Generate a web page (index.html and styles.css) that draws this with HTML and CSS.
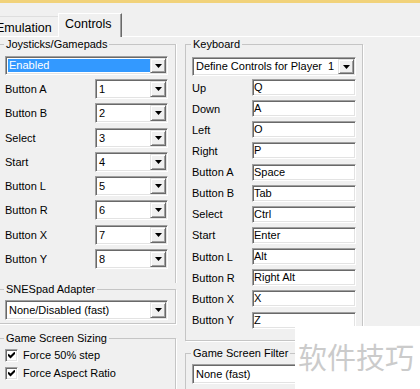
FILE: index.html
```html
<!DOCTYPE html>
<html lang="en">
<head>
    <meta charset="UTF-8">
    <meta name="viewport" content="width=device-width, initial-scale=1.0">
    <title>Controls</title>
    <link rel="stylesheet" href="styles.css">
</head>
<body>
    <div class="topbar"></div>
    <div class="tabs">
        <div class="tab">Emulation</div>
        <div class="tab active">Controls</div>
    </div>

    <div class="panel">
        <div class="col col-left">
            <fieldset class="group joy">
                <legend>Joysticks/Gamepads</legend>
                <div class="combo top-combo">
                    <span class="val selected">Enabled</span>
                    <span class="drop"><svg width="7" height="4" viewBox="0 0 7 4"><path d="M0 0h7L3.5 4z"/></svg></span>
                </div>
                <div class="rows joy-rows">
                    <div class="row"><span class="lbl">Button A</span><div class="combo"><span class="val">1</span><span class="drop"><svg width="7" height="4" viewBox="0 0 7 4"><path d="M0 0h7L3.5 4z"/></svg></span></div></div>
                    <div class="row"><span class="lbl">Button B</span><div class="combo"><span class="val">2</span><span class="drop"><svg width="7" height="4" viewBox="0 0 7 4"><path d="M0 0h7L3.5 4z"/></svg></span></div></div>
                    <div class="row"><span class="lbl">Select</span><div class="combo"><span class="val">3</span><span class="drop"><svg width="7" height="4" viewBox="0 0 7 4"><path d="M0 0h7L3.5 4z"/></svg></span></div></div>
                    <div class="row"><span class="lbl">Start</span><div class="combo"><span class="val">4</span><span class="drop"><svg width="7" height="4" viewBox="0 0 7 4"><path d="M0 0h7L3.5 4z"/></svg></span></div></div>
                    <div class="row"><span class="lbl">Button L</span><div class="combo"><span class="val">5</span><span class="drop"><svg width="7" height="4" viewBox="0 0 7 4"><path d="M0 0h7L3.5 4z"/></svg></span></div></div>
                    <div class="row"><span class="lbl">Button R</span><div class="combo"><span class="val">6</span><span class="drop"><svg width="7" height="4" viewBox="0 0 7 4"><path d="M0 0h7L3.5 4z"/></svg></span></div></div>
                    <div class="row"><span class="lbl">Button X</span><div class="combo"><span class="val">7</span><span class="drop"><svg width="7" height="4" viewBox="0 0 7 4"><path d="M0 0h7L3.5 4z"/></svg></span></div></div>
                    <div class="row"><span class="lbl">Button Y</span><div class="combo"><span class="val">8</span><span class="drop"><svg width="7" height="4" viewBox="0 0 7 4"><path d="M0 0h7L3.5 4z"/></svg></span></div></div>
                </div>
            </fieldset>

            <fieldset class="group snes">
                <legend>SNESpad Adapter</legend>
                <div class="combo">
                    <span class="val">None/Disabled (fast)</span>
                    <span class="drop"><svg width="7" height="4" viewBox="0 0 7 4"><path d="M0 0h7L3.5 4z"/></svg></span>
                </div>
            </fieldset>

            <fieldset class="group sizing">
                <legend>Game Screen Sizing</legend>
                <label class="check-row"><span class="check"><svg width="7" height="7" viewBox="0 0 7 7"><path d="M0 2.5l2.5 2.5L7 0.5" fill="none" stroke="#000" stroke-width="2"/></svg></span>Force 50% step</label>
                <label class="check-row"><span class="check"><svg width="7" height="7" viewBox="0 0 7 7"><path d="M0 2.5l2.5 2.5L7 0.5" fill="none" stroke="#000" stroke-width="2"/></svg></span>Force Aspect Ratio</label>
            </fieldset>
        </div>

        <div class="col col-right">
            <fieldset class="group keys">
                <legend>Keyboard</legend>
                <div class="combo top-combo">
                    <span class="val">Define Controls for Player&nbsp; 1</span>
                    <span class="drop"><svg width="7" height="4" viewBox="0 0 7 4"><path d="M0 0h7L3.5 4z"/></svg></span>
                </div>
                <div class="rows key-rows">
                    <div class="row"><span class="lbl">Up</span><span class="field">Q</span></div>
                    <div class="row"><span class="lbl">Down</span><span class="field">A</span></div>
                    <div class="row"><span class="lbl">Left</span><span class="field">O</span></div>
                    <div class="row"><span class="lbl">Right</span><span class="field">P</span></div>
                    <div class="row"><span class="lbl">Button A</span><span class="field">Space</span></div>
                    <div class="row"><span class="lbl">Button B</span><span class="field">Tab</span></div>
                    <div class="row"><span class="lbl">Select</span><span class="field">Ctrl</span></div>
                    <div class="row"><span class="lbl">Start</span><span class="field">Enter</span></div>
                    <div class="row"><span class="lbl">Button L</span><span class="field">Alt</span></div>
                    <div class="row"><span class="lbl">Button R</span><span class="field">Right Alt</span></div>
                    <div class="row"><span class="lbl">Button X</span><span class="field">X</span></div>
                    <div class="row"><span class="lbl">Button Y</span><span class="field">Z</span></div>
                </div>
            </fieldset>

            <fieldset class="group filter">
                <legend>Game Screen Filter</legend>
                <div class="combo">
                    <span class="val">None (fast)</span>
                    <span class="drop"><svg width="7" height="4" viewBox="0 0 7 4"><path d="M0 0h7L3.5 4z"/></svg></span>
                </div>
            </fieldset>
        </div>
    </div>

    <div class="watermark">软件技巧</div>
</body>
</html>
```

FILE: styles.css
```css
body {
    margin: 0;
    width: 420px;
    height: 389px;
    overflow: hidden;
    position: relative;
    background-color: #f0f0f0;
    font-family: "Liberation Sans", Arial, sans-serif;
    font-size: 11px;
    color: #000;
}

.topbar {
    height: 3px;
    background-color: #f1d27a;
}

/* tab strip */
.tabs {
    display: flex;
    align-items: flex-end;
    height: 33px;
    margin-left: -8px;
}

.tab {
    box-sizing: border-box;
    font-size: 12.5px;
    width: 66px;
    height: 20px;
    padding: 4px 0 0 4px;
    border-top: 1px solid #dedede;
}

.tab.active {
    position: relative;
    z-index: 1;
    width: 64px;
    height: 24px;
    margin-bottom: -1px;
    padding: 3px 0 0 6px;
    background-color: #f0f0f0;
    border: 1px solid;
    border-color: #fff #696969 transparent #fff;
    border-bottom: none;
    box-shadow: inset -1px 0 #a0a0a0;
}

.panel {
    display: flex;
    gap: 9px;
    margin-left: -3px;
    border-top: 1px solid #fff;
}

.col {
    display: flex;
    flex-direction: column;
    padding-top: 1px;
}

.col-left {
    width: 179px;
}

.col-right {
    width: 178px;
}

/* group boxes */
.group {
    margin: 0;
    min-width: 0;
    border: 1px solid #c5c5c5;
    box-shadow: 1px 1px 0 #fff;
}

.group legend {
    line-height: 13px;
    padding: 0 2px;
    margin-left: -1px;
}

.joy {
    height: 245px;
    box-sizing: border-box;
    padding: 5px 7px 0 7px;
    border-bottom: none;
    box-shadow: 1px 0 0 #fff;
}

.snes {
    padding: 4px 7px 3px 7px;
}

.sizing {
    margin-top: 8px;
    padding: 1px 7px 20px 7px;
}

.keys {
    padding: 6px 6px 11px 6px;
}

.filter {
    margin-top: 6px;
    padding: 4px 6px 10px 6px;
}

.rows {
    display: flex;
    flex-direction: column;
}

.joy-rows {
    gap: 4.25px;
}

.key-rows {
    gap: 4.15px;
}

.row {
    display: flex;
    align-items: center;
}

.joy .lbl {
    width: 90px;
}

.keys .lbl {
    width: 60px;
}

/* combo boxes */
.combo {
    display: flex;
    box-sizing: border-box;
    height: 20px;
    padding: 1px;
    background-color: #fff;
    border: 1px solid;
    border-color: #a0a0a0 #fff #fff #a0a0a0;
    box-shadow: inset 1px 1px #696969, inset -1px -1px #e3e3e3;
}

.joy-rows .combo {
    width: 73px;
}

.top-combo {
    height: 19px;
    margin-bottom: 4px;
}

.keys .top-combo {
    margin-bottom: 3px;
}

.val {
    flex: 1;
    margin: 1px 1px 1px 1px;
    padding-left: 1px;
    line-height: 14px;
    white-space: nowrap;
    overflow: hidden;
}

.top-combo .val {
    line-height: 13px;
}

.val.selected {
    background-color: #3399ff;
    color: #fff;
    margin-right: 0;
}

.drop {
    box-sizing: border-box;
    width: 16px;
    display: flex;
    align-items: center;
    justify-content: center;
    background-color: #f0f0f0;
    border: 1px solid;
    border-color: #e3e3e3 #696969 #696969 #e3e3e3;
    box-shadow: inset 1px 1px #fff, inset -1px -1px #a0a0a0;
}

.drop svg {
    display: block;
}

/* text fields */
.field {
    box-sizing: border-box;
    width: 104px;
    height: 17px;
    padding-left: 1px;
    line-height: 15px;
    background-color: #fff;
    border: 1px solid;
    border-color: #a0a0a0 #fff #fff #a0a0a0;
    box-shadow: inset 1px 1px #696969, inset -1px -1px #e3e3e3;
}

/* checkboxes */
.check-row {
    display: flex;
    align-items: center;
    gap: 5px;
    height: 18px;
}

.check {
    box-sizing: border-box;
    width: 13px;
    height: 13px;
    display: flex;
    align-items: center;
    justify-content: center;
    background-color: #fff;
    border: 1px solid;
    border-color: #a0a0a0 #fff #fff #a0a0a0;
    box-shadow: inset 1px 1px #696969, inset -1px -1px #e3e3e3;
}

.watermark {
    position: absolute;
    left: 295px;
    top: 326px;
    right: 0;
    bottom: 0;
    padding: 11px 0 0 3px;
    background-color: #fff;
    color: #cbcbcb;
    font-family: "Noto Sans CJK SC", sans-serif;
    font-size: 29px;
    line-height: 38px;
    white-space: nowrap;
}
```
